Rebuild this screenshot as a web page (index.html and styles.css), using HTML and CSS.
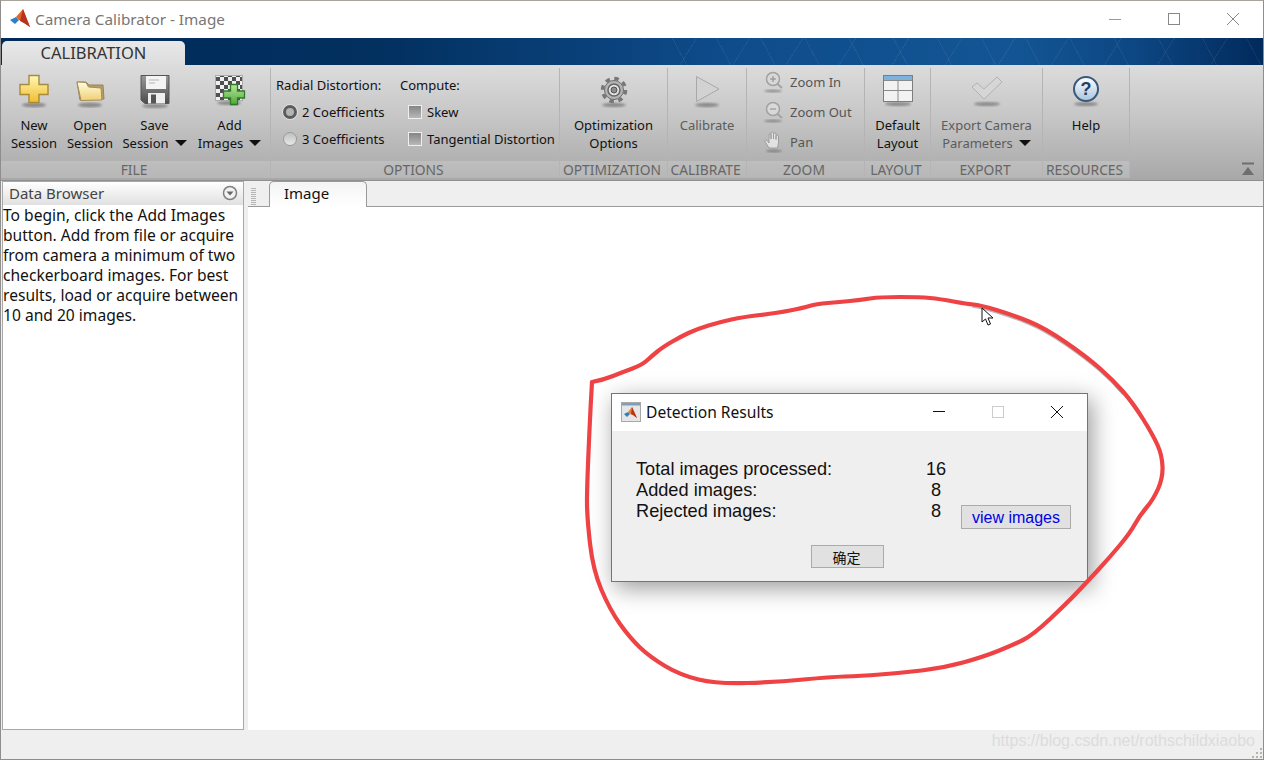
FILE: index.html
```html
<!DOCTYPE html>
<html lang="en">
<head>
    <meta charset="UTF-8">
    <meta name="viewport" content="width=device-width, initial-scale=1.0">
    <title>Camera Calibrator - Image</title>
    <link rel="stylesheet" href="styles.css">
</head>
<body>
    <svg class="defs" width="0" height="0">
        <defs>
            <linearGradient id="gold" x1="0" y1="0" x2="0" y2="1"><stop offset="0" stop-color="#fff8b8"/><stop offset="1" stop-color="#f2bd2c"/></linearGradient>
            <linearGradient id="paper" x1="0" y1="0" x2="0" y2="1"><stop offset="0" stop-color="#fffde0"/><stop offset="1" stop-color="#efd072"/></linearGradient>
            <linearGradient id="green" x1="0" y1="0" x2="0" y2="1"><stop offset="0" stop-color="#b6e89a"/><stop offset="1" stop-color="#4fa83c"/></linearGradient>
            <linearGradient id="ball" x1="0" y1="0" x2="0" y2="1"><stop offset="0" stop-color="#ffffff"/><stop offset="1" stop-color="#a8c4dc"/></linearGradient>
            <linearGradient id="steel" x1="0" y1="0" x2="0" y2="1"><stop offset="0" stop-color="#9a9a9a"/><stop offset="1" stop-color="#4c4c4c"/></linearGradient>
            <pattern id="checks" width="8" height="8" patternUnits="userSpaceOnUse">
                <rect width="8" height="8" fill="#f0f0f0"/>
                <rect width="4" height="4" fill="#505050"/>
                <rect x="4" y="4" width="4" height="4" fill="#505050"/>
            </pattern>
            <filter id="soft"><feGaussianBlur stdDeviation="1.2"/></filter>
        </defs>
    </svg>

    <div class="window">
        <header class="titlebar">
            <svg class="app-logo" width="22" height="22" viewBox="0 0 22 22">
                <path d="M1 12 L7 9 L10 12 L6 16 Z" fill="#2f7fc4"/>
                <path d="M7 9 L14 1 L21 19 L15 15 L10 12 Z" fill="#e0652a"/>
                <path d="M14 1 L11 13 L15 15 L21 19 Z" fill="#b8341c"/>
            </svg>
            <span class="app-title">Camera Calibrator - Image</span>
            <div class="window-btns">
                <svg class="win-btn" width="14" height="14" viewBox="0 0 14 14"><path d="M1 7.5H13" stroke="#999" fill="none"/></svg>
                <svg class="win-btn" width="14" height="14" viewBox="0 0 14 14"><rect x="1.5" y="1.5" width="11" height="11" stroke="#888" fill="none"/></svg>
                <svg class="win-btn" width="14" height="14" viewBox="0 0 14 14"><path d="M1 1L13 13M13 1L1 13" stroke="#888" fill="none"/></svg>
            </div>
        </header>

        <div class="tabstrip">
            <div class="ribbon-tab">CALIBRATION</div>
        </div>

        <div class="ribbon">
            <section class="group group-file">
                <div class="group-body">
                    <div class="tool tool-new">
                        <svg class="tool-icon" width="36" height="36" viewBox="0 0 36 36">
                            <ellipse class="icon-shadow" cx="18" cy="32" rx="12" ry="2.4"/>
                            <path d="M13 2.5H23V11.5H32V21.5H23V29.5H13V21.5H4V11.5H13Z" fill="url(#gold)" stroke="#a88a3c" stroke-width="1.4"/>
                        </svg>
                        <span>New<br>Session</span>
                    </div>
                    <div class="tool tool-open">
                        <svg class="tool-icon" width="36" height="36" viewBox="0 0 36 36">
                            <ellipse class="icon-shadow" cx="18" cy="32" rx="12" ry="2.4"/>
                            <path d="M5 9L14 9L17 12L31 12L32 26L8 27Z" fill="#b89c68" stroke="#9b8358"/>
                            <path d="M5 9L14 9.5L16.5 14L29 15L30 27L9 27.5Z" fill="url(#paper)" stroke="#a58d5c"/>
                        </svg>
                        <span>Open<br>Session</span>
                    </div>
                    <div class="tool tool-save">
                        <svg class="tool-icon" width="36" height="36" viewBox="0 0 36 36">
                            <ellipse class="icon-shadow" cx="18" cy="33" rx="13" ry="2"/>
                            <path d="M4 2.5H32V30.5H8L4 27Z" fill="url(#steel)" stroke="#555"/>
                            <rect x="9" y="3" width="20" height="13" fill="#f4f4f4"/>
                            <path d="M12 7H22M12 10H18" stroke="#b5b5b5"/>
                            <rect x="11" y="20" width="17" height="10.5" fill="#efefef"/>
                            <rect x="14" y="21.5" width="5" height="9" fill="#555"/>
                        </svg>
                        <span>Save<br>Session<i class="caret"></i></span>
                    </div>
                    <div class="tool tool-add">
                        <svg class="tool-icon" width="36" height="36" viewBox="0 0 36 36">
                            <ellipse class="icon-shadow" cx="17" cy="30" rx="12" ry="2"/>
                            <rect x="3.5" y="2.5" width="27" height="25" fill="url(#checks)" stroke="#aaa"/>
                            <path d="M18.5 11.5H25.500V18H32.500V25H25.500V31.500H18.500V25H11.500V18H18.500Z" fill="url(#green)" stroke="#2f7a28" stroke-width="1.3"/>
                        </svg>
                        <span>Add<br>Images<i class="caret"></i></span>
                    </div>
                </div>
                <div class="group-label">FILE</div>
            </section>

            <section class="group group-options">
                <div class="group-body options-body">
                    <div class="option-col option-col-radial">
                        <div class="option-row">Radial Distortion:</div>
                        <div class="option-row radio-row"><i class="radio radio-on"></i>2 Coefficients</div>
                        <div class="option-row radio-row"><i class="radio"></i>3 Coefficients</div>
                    </div>
                    <div class="option-col">
                        <div class="option-row">Compute:</div>
                        <div class="option-row check-row"><i class="check"></i>Skew</div>
                        <div class="option-row check-row"><i class="check"></i>Tangential Distortion</div>
                    </div>
                </div>
                <div class="group-label">OPTIONS</div>
            </section>

            <section class="group group-optim">
                <div class="group-body">
                    <div class="tool tool-wide">
                        <svg class="tool-icon" width="36" height="36" viewBox="0 0 36 36">
                            <ellipse class="icon-shadow" cx="18" cy="32" rx="12" ry="2.2"/>
                            <circle cx="18" cy="17" r="11.500" fill="none" stroke="#777" stroke-width="3.500" stroke-dasharray="4.500 4.530"/>
                            <circle cx="18" cy="17" r="9.500" fill="#b5b5b5" stroke="#6d6d6d"/>
                            <circle cx="18" cy="17" r="6" fill="#e2e2e2" stroke="#666" stroke-width="1.500"/>
                            <circle cx="18" cy="17" r="3" fill="#8c8c8c" stroke="#555"/>
                        </svg>
                        <span>Optimization<br>Options</span>
                    </div>
                </div>
                <div class="group-label">OPTIMIZATION</div>
            </section>

            <section class="group group-calib">
                <div class="group-body">
                    <div class="tool tool-wide tool-off">
                        <svg class="tool-icon" width="36" height="36" viewBox="0 0 36 36">
                            <ellipse class="icon-shadow" cx="18" cy="32" rx="12" ry="2.2"/>
                            <path d="M7.500 3.500L30 16L7.500 28.500Z" fill="#d2d2d2" stroke="#a8a8a8"/>
                        </svg>
                        <span>Calibrate</span>
                    </div>
                </div>
                <div class="group-label">CALIBRATE</div>
            </section>

            <section class="group group-zoom">
                <div class="group-body zoom-body">
                    <div class="zoom-row">
                        <svg width="22" height="24" viewBox="0 0 22 24">
                            <ellipse class="icon-shadow" cx="10" cy="21" rx="9" ry="1.500"/>
                            <circle cx="10" cy="9" r="6.500" fill="#d8d8d8" stroke="#a2a2a2" stroke-width="1.500"/>
                            <path d="M7 9H13M10 6V12" stroke="#888"/>
                            <path d="M14.500 14L19 18" stroke="#a2a2a2" stroke-width="2"/>
                        </svg>
                        <span>Zoom In</span>
                    </div>
                    <div class="zoom-row">
                        <svg width="22" height="24" viewBox="0 0 22 24">
                            <ellipse class="icon-shadow" cx="10" cy="21" rx="9" ry="1.500"/>
                            <circle cx="10" cy="9" r="6.500" fill="#d8d8d8" stroke="#a2a2a2" stroke-width="1.500"/>
                            <path d="M7 9H13" stroke="#888"/>
                            <path d="M14.500 14L19 18" stroke="#a2a2a2" stroke-width="2"/>
                        </svg>
                        <span>Zoom Out</span>
                    </div>
                    <div class="zoom-row">
                        <svg width="22" height="24" viewBox="0 0 22 24">
                            <ellipse class="icon-shadow" cx="11" cy="21" rx="8" ry="1.500"/>
                            <path d="M6 18L2 11.500C1.500 10 3 9.500 4 10.500L6 13V5C6 3.500 8 3.500 8 5V9V3.500C8 2 10.500 2 10.500 3.500V9V4C10.500 2.500 13 2.500 13 4V9.500V6C13 4.500 15.500 4.500 15.500 6V13L14.500 18Z" fill="#e2e2e2" stroke="#9c9c9c"/>
                        </svg>
                        <span>Pan</span>
                    </div>
                </div>
                <div class="group-label">ZOOM</div>
            </section>

            <section class="group group-layout">
                <div class="group-body">
                    <div class="tool tool-wide">
                        <svg class="tool-icon" width="36" height="36" viewBox="0 0 36 36">
                            <ellipse class="icon-shadow" cx="18" cy="31" rx="13" ry="2"/>
                            <rect x="3.500" y="2.500" width="29" height="26" fill="#f2f2f2" stroke="#7d7d7d"/>
                            <rect x="4" y="3" width="28" height="4" fill="#7fb2dc"/>
                            <path d="M4 7.500H32M4 17.500H32M18 8V28" stroke="#8a8a8a"/>
                        </svg>
                        <span>Default<br>Layout</span>
                    </div>
                </div>
                <div class="group-label">LAYOUT</div>
            </section>

            <section class="group group-export">
                <div class="group-body">
                    <div class="tool tool-wide tool-off">
                        <svg class="tool-icon" width="36" height="36" viewBox="0 0 36 36">
                            <ellipse class="icon-shadow" cx="18" cy="31" rx="13" ry="2"/>
                            <path d="M3 14L8 10L15 16L28 4L33 9L15 26Z" fill="#d6d6d6" stroke="#b2b2b2"/>
                        </svg>
                        <span>Export Camera<br>Parameters<i class="caret"></i></span>
                    </div>
                </div>
                <div class="group-label">EXPORT</div>
            </section>

            <section class="group group-help">
                <div class="group-body">
                    <div class="tool tool-wide">
                        <svg class="tool-icon" width="36" height="36" viewBox="0 0 36 36">
                            <ellipse class="icon-shadow" cx="18" cy="31" rx="12" ry="2"/>
                            <circle cx="18" cy="16" r="12" fill="url(#ball)" stroke="#38587c" stroke-width="2"/>
                            <text x="18" y="22" class="help-mark">?</text>
                        </svg>
                        <span>Help</span>
                    </div>
                </div>
                <div class="group-label">RESOURCES</div>
            </section>

            <svg class="collapse" width="14" height="14" viewBox="0 0 14 14">
                <path d="M1 1.500H13" stroke="#6e6e6e" stroke-width="2"/>
                <path d="M1 13L7 5L13 13Z" fill="#6e6e6e"/>
            </svg>
        </div>

        <div class="panes">
            <aside class="browser">
                <div class="browser-head">
                    <span>Data Browser</span>
                    <svg width="16" height="16" viewBox="0 0 16 16">
                        <circle cx="8" cy="8" r="6.500" fill="#f2f2f2" stroke="#808080" stroke-width="1.500"/>
                        <path d="M4.500 6.500H11.500L8 10.500Z" fill="#666"/>
                    </svg>
                </div>
                <p class="browser-text">To begin, click the Add Images button. Add from file or acquire from camera a minimum of two checkerboard images. For best results, load or acquire between 10 and 20 images.</p>
            </aside>
            <main class="doc">
                <div class="doc-tabs">
                    <i class="grip"></i>
                    <div class="doc-tab">Image</div>
                </div>
                <div class="doc-canvas"></div>
            </main>
        </div>

        <footer class="statusbar">
            <svg width="10" height="10" viewBox="0 0 10 10">
                <path d="M8 0h2v2H8zM4 4h2v2H4zM8 4h2v2H8zM0 8h2v2H0zM4 8h2v2H4zM8 8h2v2H8z" fill="#b5b5a5"/>
            </svg>
        </footer>
    </div>

    <div class="dialog">
        <div class="dialog-title">
            <svg class="dialog-logo" width="20" height="20" viewBox="0 0 20 20">
                <rect x="0.500" y="0.500" width="19" height="19" fill="#e6e6e6" stroke="#a8a8a8"/>
                <rect x="1" y="1" width="18" height="2.500" fill="#7d9fc0"/>
                <path d="M3 12L7 10L9 12L6 15Z" fill="#2f7fc4"/>
                <path d="M7 10L11 5L16 16L12 13L9 12Z" fill="#e8832a"/>
                <path d="M11 5L10 12L12 13L16 16Z" fill="#b8341c"/>
            </svg>
            <span class="dialog-name">Detection Results</span>
            <div class="dialog-btns">
                <svg width="14" height="14" viewBox="0 0 14 14"><path d="M1 6.500H13" stroke="#111" fill="none"/></svg>
                <svg width="14" height="14" viewBox="0 0 14 14"><rect x="1.500" y="1.500" width="11" height="11" stroke="#ccc" fill="none"/></svg>
                <svg width="14" height="14" viewBox="0 0 14 14"><path d="M1 1L13 13M13 1L1 13" stroke="#111" fill="none"/></svg>
            </div>
        </div>
        <div class="dialog-body">
            <div class="dialog-main">
                <div class="stats">
                    <span>Total images processed:</span><span class="stat-num">16</span>
                    <span>Added images:</span><span class="stat-num">8</span>
                    <span>Rejected images:</span><span class="stat-num">8</span>
                </div>
                <button class="view-btn">view images</button>
            </div>
            <button class="ok-btn">确定</button>
        </div>
    </div>

    <svg class="scribble" width="1264" height="760" viewBox="0 0 1264 760">
        <path class="scribble-shade" d="M973.500,304.500 Q980,305 996.500,310 Q1013,315 1029,321.500 Q1045,328 1066,342.500 Q1087,357 1100,368.500 Q1113,380 1123,391.500"/>
        <path class="scribble-line" d="M592,382 Q603,380 613,376 Q623,372 632.500,368.500 Q642,365 647.500,360 Q653,355 658,351 Q663,347 671.500,342 Q680,337 688.500,333 Q697,329 708.500,325.500 Q720,322 731.500,319.500 Q743,317 760,315 Q777,313 790,310.500 Q803,308 809.500,306 Q816,304 828,303 Q840,302 850,301 Q860,300 870,298.500 Q880,297 900,297 Q920,297 930,298 Q940,299 953.500,301.500 Q967,304 973.500,304.500 Q980,305 996.500,310 Q1013,315 1029,321.500 Q1045,328 1066,342.500 Q1087,357 1100,368.500 Q1113,380 1123,391.500 Q1133,403 1143,419 Q1153,435 1157.500,445 Q1162,455 1162.500,466.500 Q1163,478 1158,489 Q1153,500 1146.500,507.500 Q1140,515 1135,524 Q1130,533 1120,545 Q1110,557 1098.500,569.500 Q1087,582 1077,592.500 Q1067,603 1050,619 Q1033,635 1023,640 Q1013,645 998,651 Q983,657 963,662.500 Q943,668 921.500,670.500 Q900,673 880,674.500 Q860,676 845,676.500 Q830,677 803.500,679.500 Q777,682 747,683 Q717,684 698.500,679.500 Q680,675 665,666 Q650,657 640,647.500 Q630,638 620,624 Q610,610 601.500,590 Q593,570 590,543.500 Q587,517 587,502 Q587,487 588.500,452.500 Q590,418 591,400 L592,382"/>
    </svg>

    <svg class="pointer" width="14" height="20" viewBox="0 0 14 20">
        <path d="M1 1V15L4.500 12L7 18L9.500 17L7 11L12 11Z" fill="#fff" stroke="#111"/>
    </svg>

    <div class="watermark">https://blog.csdn.net/rothschildxiaobo</div>
</body>
</html>
```

FILE: styles.css
```css
* {
    box-sizing: border-box;
}
body {
    margin: 0;
    background: #fff;
    font-family: "Noto Sans", "Noto Sans CJK SC", sans-serif;
    font-size: 14px;
    color: #111;
    overflow: hidden;
}
.defs {
    display: block;
}
.window {
    display: flex;
    flex-direction: column;
    width: 1264px;
    height: 760px;
    border: 1px solid #8e8e8e;
    border-top-color: #a8a39a;
    background: #efefef;
}

/* title bar */
.titlebar {
    display: flex;
    align-items: center;
    height: 37px;
    flex: none;
    padding: 0 0 2px 8px;
    background: #fff;
}
.app-logo {
    margin-right: 4px;
}
.app-title {
    font-size: 15.3px;
    color: #777;
}
.window-btns {
    display: flex;
    margin-left: auto;
    padding-right: 23px;
    gap: 45px;
}
.tabstrip {
    display: flex;
    align-items: flex-end;
    height: 27px;
    flex: none;
    padding-left: 1px;
    background:
        repeating-linear-gradient(62deg, transparent 0 38px, rgba(255, 255, 255, .06) 38px 39px) right / 620px 100% no-repeat,
        repeating-linear-gradient(-58deg, transparent 0 44px, rgba(255, 255, 255, .06) 44px 45px) right / 620px 100% no-repeat,
        linear-gradient(90deg, #012a5c 0, #02305f 30%, #0f4c8c 58%, #135594 80%, #0d4682 90%, #012a5c 100%);
}
.ribbon-tab {
    width: 183px;
    height: 24px;
    border-radius: 5px 5px 0 0;
    background: linear-gradient(#e8e8e8, #dcdcdc);
    color: #333;
    font-size: 16.500px;
    line-height: 23px;
    text-align: center;
}

/* ribbon */
.ribbon {
    display: flex;
    height: 116px;
    flex: none;
    padding: 3px 0 2px;
    background: linear-gradient(#dcdcdc, #c6c6c6 45%, #a8a8a8);
    border-bottom: 1px solid #8f8f8f;
}
.group {
    display: flex;
    flex-direction: column;
    border-right: 1px solid #b4b4b4;
}
.group-file { width: 270px; }
.group-options { width: 289px; }
.group-optim { width: 108px; }
.group-calib { width: 79px; }
.group-zoom { width: 118px; }
.group-layout { width: 66px; }
.group-export { width: 112px; }
.group-help { width: 87px; }
.group-body {
    display: flex;
    height: 93px;
    flex: none;
}
.group-label {
    height: 18px;
    padding-right: 3px;
    background: rgba(255, 255, 255, .17);
    color: #666;
    font-size: 13.800px;
    line-height: 17px;
    text-align: center;
    white-space: nowrap;
}
.tool {
    display: flex;
    flex-direction: column;
    align-items: center;
    padding-top: 5px;
    line-height: 18px;
    text-align: center;
    white-space: nowrap;
    font-size: 13px;
}
.tool-icon {
    margin-bottom: 7px;
    flex: none;
}
.tool-new { width: 61px; padding-left: 5px; }
.tool-open { width: 56px; }
.tool-save { width: 70px; padding-left: 3px; }
.tool-add { width: 78px; padding-left: 5px; }
.tool-wide { width: 100%; }
.tool-off {
    color: #5c5c5c;
}
.caret {
    display: inline-block;
    width: 0;
    height: 0;
    margin-left: 6px;
    vertical-align: 2px;
    border-style: solid;
    border-width: 6px 6px 0;
    border-color: #111 transparent transparent;
}
.icon-shadow {
    fill: #5a5a5a;
    opacity: .55;
    filter: url(#soft);
}
.help-mark {
    font-family: "Liberation Sans", sans-serif;
    font-size: 18px;
    font-weight: bold;
    fill: #24405f;
    text-anchor: middle;
}

/* options group */
.options-body {
    padding: 3px 0 0 5px;
    font-size: 13px;
}
.option-col-radial {
    width: 124px;
}
.option-row {
    display: flex;
    align-items: center;
    height: 27px;
    white-space: nowrap;
}
.radio-row {
    padding-left: 7px;
}
.check-row {
    padding-left: 8px;
}
.radio {
    width: 14px;
    height: 14px;
    margin-right: 5px;
    border-radius: 50%;
    border: 1px solid #9a9a9a;
    background: linear-gradient(#c0c0c0, #e8e8e8);
}
.radio-on {
    border: 3px solid #5c5c5c;
    background: #b4b4b4;
    box-shadow: 0 0 0 1px #dedede;
}
.check {
    width: 14px;
    height: 14px;
    margin-right: 5px;
    border: 1px solid #efefef;
    background: linear-gradient(#858585, #b8b8b8);
}

/* zoom group */
.zoom-body {
    flex-direction: column;
    gap: 2px;
    padding-left: 16px;
    color: #555;
    font-size: 13px;
}
.zoom-row {
    display: flex;
    align-items: center;
    gap: 5px;
    height: 28px;
}
.collapse {
    margin: auto 8px 2px auto;
}

/* panes below the ribbon */
.panes {
    display: flex;
    flex: 1;
    min-height: 0;
    padding-left: 1px;
}
.browser {
    width: 242px;
    flex: none;
    border: 1px solid #a8a8a8;
    background: #fff;
}
.browser-head {
    display: flex;
    align-items: center;
    justify-content: space-between;
    height: 23px;
    padding: 0 5px 1px 6px;
    background: linear-gradient(#fff, #e0e0e0);
    color: #444;
    font-size: 15px;
}
.browser-text {
    margin: 0;
    font-size: 15.600px;
    line-height: 20px;
}
.doc {
    display: flex;
    flex: 1;
    flex-direction: column;
    margin-left: 4px;
}
.doc-tabs {
    display: flex;
    align-items: flex-end;
    height: 26px;
    padding-left: 3px;
    border-bottom: 1px solid #9a9a9a;
}
.grip {
    width: 5px;
    height: 17px;
    margin: 0 13px 1px 0;
    background: repeating-linear-gradient(#b5b5b5 0 1px, transparent 1px 2px);
}
.doc-tab {
    width: 98px;
    height: 26px;
    margin-bottom: -1px;
    padding-left: 14px;
    border: 1px solid #9a9a9a;
    border-bottom: 0;
    border-radius: 5px 5px 0 0;
    background: linear-gradient(#f4f4f4, #fff);
    font-size: 15px;
    line-height: 23px;
}
.doc-canvas {
    flex: 1;
    background: #fff;
}
.statusbar {
    display: flex;
    align-items: flex-end;
    justify-content: flex-end;
    height: 29px;
    flex: none;
    padding: 0 1px 1px 0;
    background: #efefef;
}

/* floating dialog, drawn over the app window */
.dialog {
    position: absolute;
    left: 611px;
    top: 393px;
    width: 477px;
    height: 189px;
    border: 1px solid #2c86d4;
    background: #efefef;
    box-shadow: 4px 6px 22px rgba(0, 0, 0, .4);
}
.dialog-title {
    display: flex;
    align-items: center;
    height: 37px;
    padding: 0 0 1px 9px;
    background: #fff;
}
.dialog-name {
    margin-left: 5px;
    font-size: 15.600px;
}
.dialog-btns {
    display: flex;
    gap: 45px;
    margin-left: auto;
    padding-right: 23px;
}
.dialog-body {
    padding: 28px 16px 0 24px;
    font-family: "Liberation Sans", "Noto Sans CJK SC", sans-serif;
    font-size: 16px;
}
.dialog-main {
    display: flex;
    align-items: flex-end;
}
.stats {
    display: grid;
    grid-template-columns: 280px 40px;
    grid-auto-rows: 21px;
    font-size: 18.200px;
    line-height: 21px;
    white-space: nowrap;
}
.stat-num {
    text-align: center;
}
.view-btn {
    width: 110px;
    height: 24px;
    margin: 0 0 -7px 5px;
    padding: 1px 0 0;
    border: 1px solid #ababab;
    background: #e1e1e1;
    color: #0000e6;
    font: inherit;
}
.ok-btn {
    display: block;
    width: 73px;
    height: 23px;
    margin: 23px 0 0 175px;
    padding: 0 2px 0 0;
    border: 1px solid #ababab;
    background: #e1e1e1;
    color: #111;
    font: inherit;
    font-size: 14px;
}

/* pen annotation on top of the screenshot */
.scribble {
    position: absolute;
    left: 0;
    top: 0;
    pointer-events: none;
}
.scribble path {
    fill: none;
    stroke-linejoin: round;
    stroke-linecap: round;
}
.scribble-line {
    stroke: #ee4244;
    stroke-width: 4.200;
}
.scribble-shade {
    stroke: #8a8a8a;
    stroke-width: 3;
    opacity: .6;
    transform: translate(0, 2px);
}
.pointer {
    position: absolute;
    left: 981px;
    top: 307px;
}
.watermark {
    position: absolute;
    right: 9px;
    bottom: 9px;
    color: #dcdcdc;
    font-family: "Liberation Sans", sans-serif;
    font-size: 16px;
    line-height: 20px;
}
```
